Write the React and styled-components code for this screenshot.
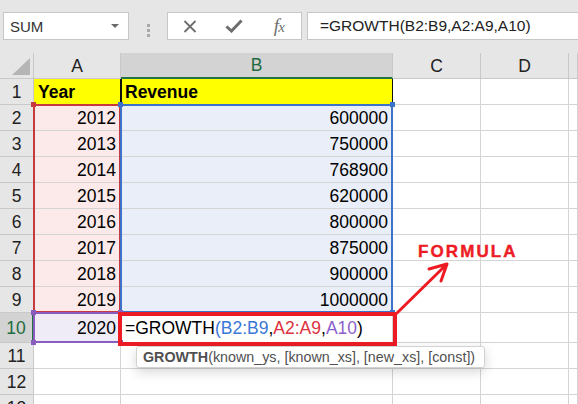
import React from 'react';
import styled, { createGlobalStyle, css } from 'styled-components';

const GlobalStyle = createGlobalStyle`
  html, body { margin: 0; padding: 0; background: #fff; }
  body { overflow: hidden; }
`;

const Page = styled.div`
  position: relative;
  width: 578px;
  height: 404px;
  overflow: hidden;
  background: #fff;
  font-family: "Liberation Sans", Arial, sans-serif;
`;

/* ---------- formula bar ---------- */

const Toolbar = styled.div`
  display: flex;
  align-items: flex-start;
  height: 53px;
  padding: 12px 0 0 3px;
  box-sizing: border-box;
  background: #e6e6e6;
`;

const Field = styled.div`
  display: flex;
  align-items: center;
  height: 28px;
  box-sizing: border-box;
  background: #fff;
  border: 1px solid #c6c6c6;
`;

const NameBox = styled(Field)`
  width: 126px;
  justify-content: space-between;
  padding: 0 9px 0 6px;
  font-size: 15px;
  color: #333;
`;

const Caret = styled.span`
  width: 0;
  height: 0;
  border-left: 4px solid transparent;
  border-right: 4px solid transparent;
  border-top: 4px solid #6a6a6a;
`;

const Grip = styled.div`
  width: 3px;
  height: 3px;
  margin: 12px 17px 0 18px;
  background: #a9a9a9;
  box-shadow: 0 5px #a9a9a9, 0 10px #a9a9a9;
`;

const ButtonBox = styled(Field)`
  width: 135px;
  display: grid;
  grid-template-columns: repeat(3, 1fr);
  align-items: center;
  justify-items: center;
`;

const Fx = styled.span`
  font-family: "Liberation Serif", "Times New Roman", serif;
  font-style: italic;
  font-size: 19px;
  color: #707070;
  letter-spacing: -1px;
  & > span { font-size: 15px; }
`;

const FormulaBox = styled(Field)`
  flex: 1;
  margin-left: 5px;
  margin-right: -2px;
  padding-left: 12px;
  font-size: 15.5px;
  color: #222;
`;

/* ---------- sheet ---------- */

const Sheet = styled.div`
  display: grid;
  grid-template-columns: 34px 87px 272px 88px 88px 1fr;
  grid-template-rows: repeat(10, 26px) 30px repeat(3, 26px);
`;

const Cell = styled.div`
  grid-row: ${p => p.$r};
  grid-column: ${p => p.$c};
  display: flex;
  align-items: center;
  justify-content: ${p => (p.$right ? 'flex-end' : 'flex-start')};
  padding: 1px 4px 0;
  box-sizing: border-box;
  min-width: 0;
  white-space: nowrap;
  font-size: 17.5px;
  font-weight: ${p => (p.$bold ? 700 : 400)};
  color: #000;
  background: ${p => p.$bg || 'transparent'};
  border-right: 1px solid ${p => p.$edge || '#d4d4d4'};
  border-bottom: 1px solid #d4d4d4;
  ${p => p.$leftRule && css`box-shadow: inset 1px 0 #111;`}
`;

const Head = styled.div`
  grid-row: ${p => p.$r};
  grid-column: ${p => p.$c};
  position: relative;
  display: flex;
  align-items: center;
  justify-content: center;
  padding-top: 1px;
  box-sizing: border-box;
  font-size: 17.5px;
  color: ${p => (p.$sel ? '#1e6b40' : '#222')};
  background: ${p => (p.$sel ? '#d3d3d3' : '#e6e6e6')};
  border-right: ${p => (p.$sel && p.$row ? '2px solid #217346' : '1px solid #c9c9c9')};
  border-bottom: ${p => (p.$sel && !p.$row ? '2px solid #217346' : '1px solid #c9c9c9')};
`;

const Corner = styled(Head)`
  &::after {
    content: '';
    position: absolute;
    right: 3px;
    bottom: 3px;
    width: 18px;
    height: 17px;
    background: #b5b5b5;
    clip-path: polygon(100% 0, 100% 100%, 0 100%);
  }
`;

const Range = styled.div`
  grid-row: ${p => p.$r};
  grid-column: ${p => p.$c};
  position: relative;
  margin: -1px 0 0 -1px;
  border: 2px solid ${p => p.$color};
  pointer-events: none;
  z-index: 1;
`;

const Handle = styled.span`
  position: absolute;
  width: 5px;
  height: 5px;
  background: ${p => p.$color};
  ${p => (p.$top ? 'top: -4px;' : 'bottom: -4px;')}
  ${p => (p.$left ? 'left: -4px;' : 'right: -4px;')}
`;

const EditCell = styled(Cell)`
  position: relative;
  z-index: 3;
  overflow: visible;
`;

const Ref = styled.span`
  color: ${p => p.$color};
`;

const Callout = styled.div`
  position: absolute;
  top: -1px;
  left: -3px;
  right: -5px;
  bottom: -4px;
  border: 4px solid #ed1c24;
`;

const Tooltip = styled.div`
  position: absolute;
  top: 33px;
  left: 15px;
  width: 349px;
  height: 22px;
  display: flex;
  align-items: center;
  padding: 0 6px;
  box-sizing: border-box;
  background: #fff;
  border: 1px solid #d2d2d2;
  border-radius: 3px;
  box-shadow: 0 4px 12px rgba(0, 0, 0, 0.16);
  font-size: 14.3px;
  color: #505050;
  & > b { font-weight: 700; color: #505050; }
`;

/* ---------- annotation ---------- */

const Label = styled.div`
  position: absolute;
  top: 243px;
  left: 418px;
  font-size: 17px;
  line-height: 17px;
  font-weight: 700;
  letter-spacing: 2.1px;
  color: #ed1c24;
  -webkit-text-stroke: 0.4px #ed1c24;
  z-index: 5;
`;

const Arrow = styled.svg`
  position: absolute;
  left: 390px;
  top: 255px;
  z-index: 5;
`;

const HANDLES = [
  { $top: true, $left: true },
  { $top: true },
  { $left: true },
  {},
];

const RangeBox = ({ r, c, color }) => (
  <Range $r={r} $c={c} $color={color}>
    {HANDLES.map((h, i) => <Handle key={i} {...h} $color={color} />)}
  </Range>
);

const rows = [
  [2012, 600000],
  [2013, 750000],
  [2014, 768900],
  [2015, 620000],
  [2016, 800000],
  [2017, 875000],
  [2018, 900000],
  [2019, 1000000],
];

const BLUE = '#3c73c8';
const RED = '#c63a3e';
const PURPLE = '#8a5cbf';

const App = () => (
  <Page>
    <GlobalStyle />
    <Toolbar>
      <NameBox>SUM<Caret /></NameBox>
      <Grip />
      <ButtonBox>
        <svg width="14" height="13" viewBox="0 0 14 13">
          <path d="M1.5 1 L12.5 12 M12.5 1 L1.5 12" stroke="#6d6d6d" strokeWidth="1.8" fill="none" />
        </svg>
        <svg width="18" height="14" viewBox="0 0 18 14">
          <path d="M1.5 7.5 L6.5 12 L16.5 1.5" stroke="#6d6d6d" strokeWidth="3" fill="none" />
        </svg>
        <Fx>f<span>x</span></Fx>
      </ButtonBox>
      <FormulaBox>=GROWTH(B2:B9,A2:A9,A10)</FormulaBox>
    </Toolbar>

    <Sheet>
      <Corner $r={1} $c={1} />
      {['A', 'B', 'C', 'D', ''].map((l, i) => (
        <Head key={l || 'E'} $r={1} $c={i + 2} $sel={l === 'B'}>{l}</Head>
      ))}
      {Array.from({ length: 13 }, (_, i) => (
        <Head key={`r${i}`} $r={i + 2} $c={1} $row $sel={i + 1 === 10}>{i + 1}</Head>
      ))}

      <Cell $r={2} $c={2} $bold $bg="#ffff00" $edge="#111">Year</Cell>
      <Cell $r={2} $c={3} $bold $bg="#ffff00" $edge="#111" $leftRule>Revenue</Cell>

      {rows.map(([year, rev], i) => (
        <React.Fragment key={year}>
          <Cell $r={i + 3} $c={2} $right $bg="#fbeae9">{year}</Cell>
          <Cell $r={i + 3} $c={3} $right $bg="#e9eef8">{rev}</Cell>
        </React.Fragment>
      ))}

      <Cell $r={11} $c={2} $right $bg="#efebf7">2020</Cell>
      <EditCell $r={11} $c={3}>
        =GROWTH<Ref $color="#3a78d6">(B2:B9</Ref>,<Ref $color="#dc3240">A2:A9</Ref>,<Ref $color="#8d5fca">A10</Ref>)
        <Callout />
        <Tooltip><b>GROWTH</b>(known_ys, [known_xs], [new_xs], [const])</Tooltip>
      </EditCell>

      {Array.from({ length: 13 }, (_, i) => i + 2).flatMap(r =>
        [2, 3, 4, 5, 6]
          .filter(c => c > 3 || r > 11)
          .map(c => <Cell key={`${r}-${c}`} $r={r} $c={c} />)
      )}

      <RangeBox r="3 / 11" c={2} color={RED} />
      <RangeBox r="3 / 11" c={3} color={BLUE} />
      <RangeBox r={11} c={2} color={PURPLE} />
    </Sheet>

    <Label>FORMULA</Label>
    <Arrow width="70" height="70" viewBox="0 0 70 70">
      <path d="M7 58 L57 9 M39 14 L57 9 L51 26" stroke="#ed1c24" strokeWidth="3" fill="none" strokeLinecap="round" strokeLinejoin="round" />
    </Arrow>
  </Page>
);

export default App;
